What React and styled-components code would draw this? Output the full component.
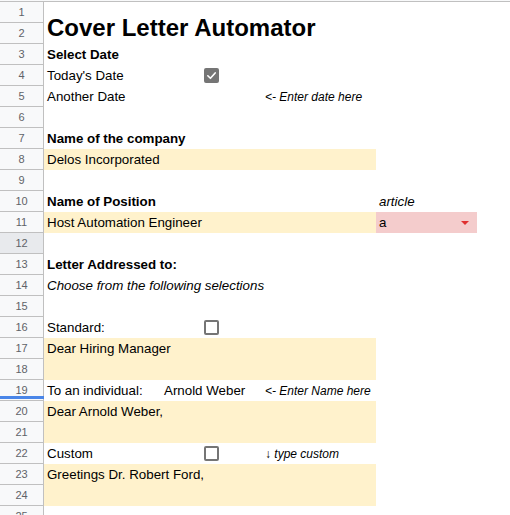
import React from "react";
import styled, { createGlobalStyle, css } from "styled-components";

const GlobalStyle = createGlobalStyle`
  html, body {
    margin: 0;
    padding: 0;
    background: #ffffff;
  }
  body {
    font-family: "Liberation Sans", Arial, sans-serif;
    overflow: hidden;
  }
`;

const ROW_COUNT = 25;

// cells of the sheet: r = row, c = column (1 = A), cs/rs = spans
const cells = [
  { r: 2, c: 1, text: "Cover Letter Automator", kind: "title" },
  { r: 3, c: 1, text: "Select Date", kind: "bold" },
  { r: 4, c: 1, text: "Today's Date" },
  { r: 4, c: 2, check: true },
  { r: 5, c: 1, text: "Another Date" },
  { r: 5, c: 3, text: "<- Enter date here", kind: "note" },
  { r: 7, c: 1, text: "Name of the company", kind: "bold" },
  { r: 8, c: 1, cs: 3, text: "Delos Incorporated", fill: "yellow" },
  { r: 10, c: 1, text: "Name of Position", kind: "bold" },
  { r: 10, c: 4, text: "article", kind: "italic" },
  { r: 11, c: 1, cs: 3, text: "Host Automation Engineer", fill: "yellow" },
  { r: 11, c: 4, text: "a", fill: "red", dropdown: true },
  { r: 13, c: 1, text: "Letter Addressed to:", kind: "bold" },
  { r: 14, c: 1, text: "Choose from the following selections", kind: "italic" },
  { r: 16, c: 1, text: "Standard:" },
  { r: 16, c: 2, check: false },
  { r: 17, c: 1, cs: 3, rs: 2, text: "Dear Hiring Manager", fill: "yellow" },
  { r: 19, c: 1, text: "To an individual:" },
  { r: 19, c: 2, text: "Arnold Weber" },
  { r: 19, c: 3, text: "<- Enter Name here", kind: "note" },
  { r: 20, c: 1, cs: 3, rs: 2, text: "Dear Arnold Weber,", fill: "yellow" },
  { r: 22, c: 1, text: "Custom" },
  { r: 22, c: 2, check: false },
  { r: 22, c: 3, text: "↓ type custom", kind: "note" },
  { r: 23, c: 1, cs: 3, rs: 2, text: "Greetings Dr. Robert Ford,", fill: "yellow" },
];

const fills = {
  yellow: "#fff2cc",
  red: "#f4cccc",
};

const Sheet = styled.div`
  display: flex;
  flex-direction: column;
  width: 510px;
  height: 515px;
  overflow: hidden;
`;

const HeaderStrip = styled.div`
  height: 1px;
  background: #f8f9fa;
  border-bottom: 1px solid #c0c0c0;
  flex: none;
`;

const Grid = styled.div`
  display: grid;
  grid-template-columns: 44px 117px 101px 114px 101px 1fr;
  grid-template-rows: repeat(${ROW_COUNT}, 21px);
`;

const RowHead = styled.div`
  grid-column: 1;
  grid-row: ${(p) => p.$row};
  position: relative;
  box-sizing: border-box;
  border-right: 1px solid #c0c0c0;
  border-bottom: 1px solid #c0c0c0;
  background: ${(p) => (p.$active ? "#e8eaed" : "#f8f9fa")};
  color: #5f6368;
  font-size: 11px;
  display: flex;
  align-items: center;
  justify-content: center;

  ${(p) =>
    p.$marker &&
    css`
      &::after {
        content: "";
        position: absolute;
        left: 0;
        right: -1px;
        bottom: 1px;
        height: 3px;
        background: #4a86e8;
      }
    `}
`;

const kindStyles = {
  title: css`
    font-size: 24px;
    font-weight: bold;
    line-height: 28px;
  `,
  bold: css`
    font-weight: bold;
  `,
  italic: css`
    font-style: italic;
  `,
  note: css`
    font-style: italic;
    font-size: 12px;
  `,
};

const Cell = styled.div`
  grid-column: ${(p) => p.$col + 1} / span ${(p) => p.$cs};
  grid-row: ${(p) => p.$row} / span ${(p) => p.$rs};
  background: ${(p) => (p.$fill ? fills[p.$fill] : "transparent")};
  display: flex;
  align-items: ${(p) => (p.$rs > 1 ? "flex-start" : "flex-end")};
  justify-content: space-between;
  padding: 0 3px 2px 3px;
  padding-top: ${(p) => (p.$rs > 1 ? "3px" : "0")};
  box-sizing: border-box;
  white-space: nowrap;
  font-size: 13.33px;
  line-height: 16px;
  color: #000000;
  overflow: visible;
  z-index: 1;
  ${(p) => p.$kind && kindStyles[p.$kind]}
`;

const CheckCell = styled.div`
  grid-column: ${(p) => p.$col + 1};
  grid-row: ${(p) => p.$row};
  display: flex;
  align-items: center;
  justify-content: center;
`;

const Box = styled.span`
  width: 15px;
  height: 15px;
  box-sizing: border-box;
  border-radius: 2px;
  display: flex;
  align-items: center;
  justify-content: center;
  background: ${(p) => (p.$checked ? "#757575" : "#ffffff")};
  border: 2px solid #757575;
`;

const Arrow = styled.span`
  width: 0;
  height: 0;
  margin: 0 5px 6px 0;
  border-left: 4px solid transparent;
  border-right: 4px solid transparent;
  border-top: 4px solid #e03030;
`;

const Checkbox = ({ checked }) => (
  <Box $checked={checked}>
    {checked && (
      <svg width="11" height="11" viewBox="0 0 12 12">
        <path
          d="M2 6.3 L4.8 9 L10 3.2"
          fill="none"
          stroke="#ffffff"
          strokeWidth="1.8"
          strokeLinecap="round"
          strokeLinejoin="round"
        />
      </svg>
    )}
  </Box>
);

const App = () => {
  const rows = Array.from({ length: ROW_COUNT }, (_, i) => i + 1);

  return (
    <>
      <GlobalStyle />
      <Sheet>
        <HeaderStrip />
        <Grid>
          {rows.map((n) => (
            <RowHead key={n} $row={n} $active={n === 12} $marker={n === 19}>
              {n}
            </RowHead>
          ))}
          {cells.map((cell, i) =>
            cell.check !== undefined ? (
              <CheckCell key={i} $row={cell.r} $col={cell.c}>
                <Checkbox checked={cell.check} />
              </CheckCell>
            ) : (
              <Cell
                key={i}
                $row={cell.r}
                $col={cell.c}
                $cs={cell.cs || 1}
                $rs={cell.rs || 1}
                $fill={cell.fill}
                $kind={cell.kind}
              >
                <span>{cell.text}</span>
                {cell.dropdown && <Arrow />}
              </Cell>
            )
          )}
        </Grid>
      </Sheet>
    </>
  );
};

export default App;
